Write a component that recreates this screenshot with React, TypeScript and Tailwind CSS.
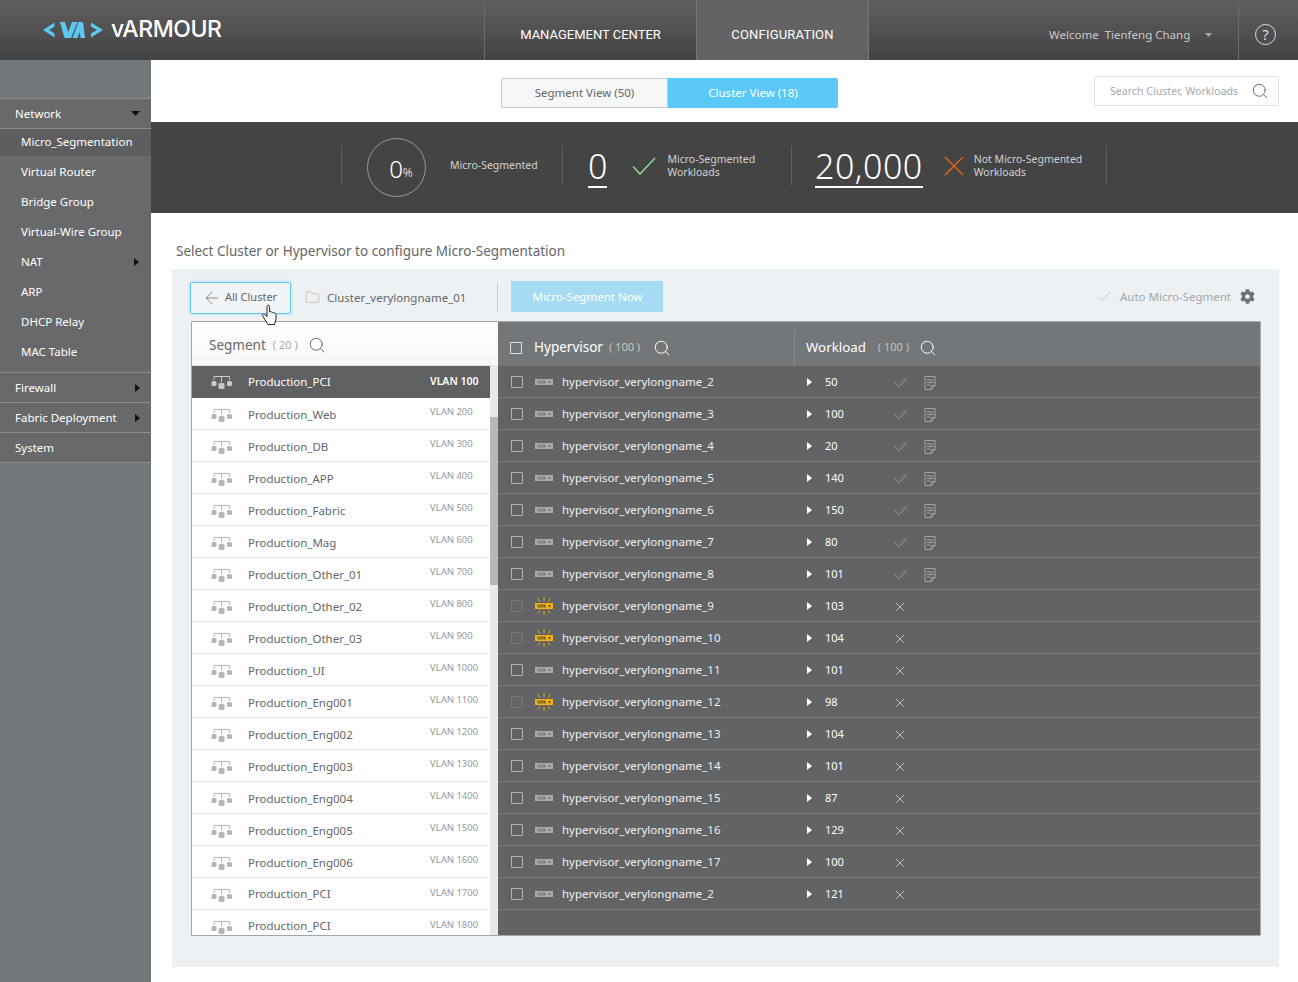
import { ArrowLeft, Folder, Search } from "lucide-react";
import { FaCog } from "react-icons/fa";

const font = "font-['Noto_Sans',sans-serif]";

const subItems = [
  { label: "Micro_Segmentation", active: true },
  { label: "Virtual Router" },
  { label: "Bridge Group" },
  { label: "Virtual-Wire Group" },
  { label: "NAT", arrow: true },
  { label: "ARP" },
  { label: "DHCP Relay" },
  { label: "MAC Table" },
];

const segments = [
  ["Production_PCI", "VLAN 100"],
  ["Production_Web", "VLAN 200"],
  ["Production_DB", "VLAN 300"],
  ["Production_APP", "VLAN 400"],
  ["Production_Fabric", "VLAN 500"],
  ["Production_Mag", "VLAN 600"],
  ["Production_Other_01", "VLAN 700"],
  ["Production_Other_02", "VLAN 800"],
  ["Production_Other_03", "VLAN 900"],
  ["Production_UI", "VLAN 1000"],
  ["Production_Eng001", "VLAN 1100"],
  ["Production_Eng002", "VLAN 1200"],
  ["Production_Eng003", "VLAN 1300"],
  ["Production_Eng004", "VLAN 1400"],
  ["Production_Eng005", "VLAN 1500"],
  ["Production_Eng006", "VLAN 1600"],
  ["Production_PCI", "VLAN 1700"],
  ["Production_PCI", "VLAN 1800"],
];

const hypervisors = [
  { name: "hypervisor_verylongname_2", count: 50, done: true },
  { name: "hypervisor_verylongname_3", count: 100, done: true },
  { name: "hypervisor_verylongname_4", count: 20, done: true },
  { name: "hypervisor_verylongname_5", count: 140, done: true },
  { name: "hypervisor_verylongname_6", count: 150, done: true },
  { name: "hypervisor_verylongname_7", count: 80, done: true },
  { name: "hypervisor_verylongname_8", count: 101, done: true },
  { name: "hypervisor_verylongname_9", count: 103, warn: true },
  { name: "hypervisor_verylongname_10", count: 104, warn: true },
  { name: "hypervisor_verylongname_11", count: 101 },
  { name: "hypervisor_verylongname_12", count: 98, warn: true },
  { name: "hypervisor_verylongname_13", count: 104 },
  { name: "hypervisor_verylongname_14", count: 101 },
  { name: "hypervisor_verylongname_15", count: 87 },
  { name: "hypervisor_verylongname_16", count: 129 },
  { name: "hypervisor_verylongname_17", count: 100 },
  { name: "hypervisor_verylongname_2", count: 121 },
];

function Logo() {
  return (
    <svg width="61" height="18" viewBox="0 0 61 18" className="block shrink-0">
      <g fill="#5cc8f2">
        <path d="M11.500 1.500 0 9l11.500 7.500v-4.200L6 9l5.500-3.300z" />
        <path d="M17 1h5l4.500 14L24 17h-2.500z" />
        <path d="M29 1h5.500L28 17h-5z" />
        <path d="M35.500 1H40l2 16h-4.500l-.6-6-2.400 6H29.500z" />
        <path d="M48 1.500 60 9l-12 7.500v-4.200L54 9l-6-3.300z" />
      </g>
    </svg>
  );
}

function SegmentIcon({ color }: { color: string }) {
  return (
    <svg width="21" height="13" viewBox="0 0 21 13" className="block shrink-0">
      <path d="M3 4V.5h15.500V4M10.500 .5V6" fill="none" stroke={color} strokeWidth="1" />
      <rect x="0.500" y="5" width="5" height="5" rx="1.500" fill={color} />
      <rect x="7.500" y="7" width="6" height="6" rx="1.500" fill={color} />
      <rect x="16" y="5" width="5" height="5" rx="1.500" fill={color} />
    </svg>
  );
}

function ServerIcon({ warn }: { warn?: boolean }) {
  const c = warn ? "#f5b014" : "#a9abad";
  return (
    <svg width="20" height="20" viewBox="0 0 20 20" className="block shrink-0">
      {warn && (
        <path
          d="M10 1v4M10 15v4M4 2.500l2 3M16 2.500l-2 3M4 17.500l2-3M16 17.500l-2-3"
          stroke={c}
          strokeWidth="1"
          fill="none"
        />
      )}
      <rect x="1" y="7" width="18" height="6" fill={c} />
      <path d="M3.500 8.500h8v3h-8zM14.500 9h2v2h-2z" fill={warn ? "#6b5a2a" : "#77797b"} />
      <path d="M5 8.500v3M7 8.500v3M9 8.500v3" stroke={c} strokeWidth="0.700" />
    </svg>
  );
}

function ThinCheck({ size = 14, color = "#a4a6a8" }: { size?: number; color?: string }) {
  return (
    <svg width={size} height={size * 0.75} viewBox="0 0 16 12" className="block">
      <path d="M1 6.500 5.500 11 15 1" fill="none" stroke={color} strokeWidth="1" />
    </svg>
  );
}

function NoteIcon() {
  return (
    <svg width="12" height="14" viewBox="0 0 12 14" className="block">
      <path d="M1 .5h10v9l-3.500 4H1z" fill="none" stroke="#a4a6a8" />
      <path d="M3 4h6M3 6.500h6M3 9h3M7.500 13V9.500H11" fill="none" stroke="#a4a6a8" />
    </svg>
  );
}

function Caret({ color = "#fff", dir = "right" }: { color?: string; dir?: "right" | "down" }) {
  return dir === "right" ? (
    <svg width="5" height="8" viewBox="0 0 5 8" className="block">
      <path d="M0 0 5 4 0 8z" fill={color} />
    </svg>
  ) : (
    <svg width="9" height="5" viewBox="0 0 9 5" className="block">
      <path d="M0 0h9L4.500 5z" fill={color} />
    </svg>
  );
}

function Header() {
  return (
    <div className="flex h-[60px] bg-gradient-to-b from-[#605e5e] to-[#444343] text-white">
      <div className="flex w-[484px] items-center pl-[43px] pb-[1px]">
        <Logo />
        <span className="ml-[7px] -mt-[1px] font-['Inter',sans-serif] text-[23px] font-medium leading-none tracking-[-0.4px]">
          vARMOUR
        </span>
      </div>
      <div className="flex h-[60px] w-[212px] items-center justify-center border-l border-[#6d6b6b] pt-[10px] font-['Roboto',sans-serif] text-[13px]">
        MANAGEMENT CENTER
      </div>
      <div className="flex h-[60px] w-[173px] items-center justify-center border-x border-[#777] bg-[#636363] pt-[10px] font-['Roboto',sans-serif] text-[13px] tracking-[0.2px]">
        CONFIGURATION
      </div>
      <div className="flex flex-1 items-center pl-[180px] pt-[9px] text-[11.500px] text-[#c9c9c9]">
        <span>Welcome</span>
        <span className="ml-[6px]">Tienfeng Chang</span>
        <span className="ml-[15px]">
          <svg width="7" height="4" viewBox="0 0 7 4" className="block">
            <path d="M0 0h7L3.500 4z" fill="#aaa" />
          </svg>
        </span>
      </div>
      <div className="flex w-[60px] items-center justify-center border-l border-[#6d6b6b] pr-[6px] pt-[9px]">
        <div className="flex h-[21px] w-[21px] items-center justify-center rounded-full border border-[#ddd] text-[15px] leading-none text-[#ddd]">
          ?
        </div>
      </div>
    </div>
  );
}

function SideRow({ label, arrow, down }: { label: string; arrow?: boolean; down?: boolean }) {
  return (
    <div className="flex h-[30px] items-center justify-between border-b border-[#898b8d] pl-[15px] pr-[11px] text-[11.500px] text-white">
      <span>{label}</span>
      {down && <Caret color="#111" dir="down" />}
      {arrow && <Caret color="#111" />}
    </div>
  );
}

function Sidebar() {
  return (
    <div className="flex w-[151px] shrink-0 flex-col bg-[#73777a]">
      <div className="h-[39px] border-b border-[#898b8d]" />
      <div className="bg-[#68696b]">
        <SideRow label="Network" down />
      </div>
      <div className="bg-[#68696b] pb-[6px]">
        {subItems.map((item) => (
          <div
            key={item.label}
            className={`flex items-center justify-between pl-[21px] pr-[12px] text-[11.500px] text-white ${
              item.active ? "h-[27px] bg-[#5d5e60] pb-[1px]" : "h-[30px] pt-[1px]"
            }`}
          >
            <span>{item.label}</span>
            {item.arrow && <Caret color="#111" />}
          </div>
        ))}
      </div>
      <div className="border-t border-[#898b8d] bg-[#68696b]">
        <SideRow label="Firewall" arrow />
        <SideRow label="Fabric Deployment" arrow />
        <SideRow label="System" />
      </div>
    </div>
  );
}

function Stats() {
  return (
    <div className="flex h-[91px] items-center bg-[#444444] pl-[190px] pb-[4px] text-[#d2d2d2]">
      <div className="flex h-[39px] w-[221px] items-center border-l border-[#5f5f5f] pl-[25px]">
        <div className="mt-[4px] flex h-[59px] w-[59px] shrink-0 items-center justify-center rounded-full border border-[#9a9a9a] pl-[9px] pt-[2px]">
          <span className="text-[24px] font-light leading-none text-white">0</span>
          <span className="mt-[8px] text-[12px] leading-none">%</span>
        </div>
        <span className="ml-[24px] text-[10.500px]">Micro-Segmented</span>
      </div>
      <div className="flex h-[39px] w-[229px] items-center border-l border-[#5f5f5f] pl-[25px]">
        <span className="mt-[2px] border-b-2 border-white text-[34px] font-light leading-[40px] text-white">0</span>
        <svg width="24" height="18" viewBox="0 0 24 18" className="ml-[25px] shrink-0">
          <path d="M1 9.500 8 17 23 1" fill="none" stroke="#8ee08f" strokeWidth="1.500" />
        </svg>
        <span className="ml-[11px] text-[10.500px] leading-[13px]">
          Micro-Segmented
          <br />
          Workloads
        </span>
      </div>
      <div className="flex h-[39px] w-[316px] items-center border-x border-[#5f5f5f] pl-[23px]">
        <span className="mt-[2px] border-b-2 border-white text-[34px] font-light leading-[40px] tracking-[0.5px] text-white">
          20,000
        </span>
        <svg width="20" height="20" viewBox="0 0 20 20" className="ml-[21px] shrink-0">
          <path d="M1 1l18 18M19 1 1 19" fill="none" stroke="#e0661a" strokeWidth="1.500" />
        </svg>
        <span className="ml-[10px] text-[10.500px] leading-[13px]">
          Not Micro-Segmented
          <br />
          Workloads
        </span>
      </div>
    </div>
  );
}

function SegmentList() {
  return (
    <div className="flex w-[306px] shrink-0 flex-col overflow-hidden bg-white">
      <div className="flex h-[44px] shrink-0 items-center border-b border-[#e2e4e6] bg-gradient-to-b from-white to-[#f6f7f8] pl-[17px] pt-[3px]">
        <span className="text-[13.500px] text-[#666]">Segment</span>
        <span className="ml-[7px] text-[11px] text-[#aaa]">( 20 )</span>
        <Search size={18} strokeWidth={1.3} className="ml-[10px] text-[#666]" />
      </div>
      <div className="flex min-h-0 flex-1">
        <div className="w-[298px] shrink-0">
          {segments.map(([name, vlan], i) => (
            <div
              key={vlan}
              className={`flex h-[32px] items-center border-b pl-[19px] ${
                i === 0 ? "border-[#5f6062] bg-[#5f6062] text-white" : "border-[#e6e8ea] text-[#666]"
              }`}
            >
              <span className={i === 0 ? "mt-[2px]" : "mt-[4px]"}>
                <SegmentIcon color={i === 0 ? "#c9cacb" : "#b4b6b8"} />
              </span>
              <span className={`ml-[16px] w-[182px] text-[11.500px] ${i === 0 || i > 15 ? "" : "mt-[2px]"}`}>
                {name}
              </span>
              {i === 0 ? (
                <span className="text-[10.500px] font-semibold">{vlan}</span>
              ) : (
                <span className={`text-[9.500px] text-[#999] ${i > 15 ? "" : "mb-[2px]"}`}>{vlan}</span>
              )}
            </div>
          ))}
        </div>
        <div className="w-[8px] shrink-0 bg-[#e6e8ea] pt-[51px]">
          <div className="h-[168px] bg-[#b5b8ba]" />
        </div>
      </div>
    </div>
  );
}

function Box({ dim }: { dim?: boolean }) {
  return (
    <span
      className={`block h-[12px] w-[12px] shrink-0 rounded-[1px] border ${dim ? "border-[#77787a]" : "border-[#b4b6b8]"}`}
    />
  );
}

function HypervisorTable() {
  return (
    <div className="flex flex-1 flex-col bg-[#626365]">
      <div className="flex h-[44px] shrink-0 bg-[#73777a] text-white">
        <div className="flex w-[296px] items-center pl-[12px] pt-[7px]">
          <span className="block h-[12px] w-[12px] border border-[#e2e3e4]" />
          <span className="ml-[12px] text-[13.500px]">Hypervisor</span>
          <span className="ml-[6px] text-[11px] text-[#c4c6c8]">( 100 )</span>
          <Search size={18} strokeWidth={1.3} className="ml-[13px]" />
        </div>
        <div className="mt-[7px] flex flex-1 items-center border-l border-[#888b8d] pl-[11px]">
          <span className="text-[13.300px]">Workload</span>
          <span className="ml-[12px] text-[11px] text-[#c4c6c8]">( 100 )</span>
          <Search size={18} strokeWidth={1.3} className="ml-[10px]" />
        </div>
      </div>
      {hypervisors.map((h, i) => (
        <div key={i} className="flex h-[32px] items-center border-b border-[#7a7b7d] pl-[13px] text-white">
          <Box dim={h.warn} />
          <span className="ml-[11px]">
            <ServerIcon warn={h.warn} />
          </span>
          <span className="ml-[8px] w-[245px] text-[11.500px] text-[#f0f0f0]">{h.name}</span>
          <Caret />
          <span className="ml-[13px] mt-[2px] w-[69px] text-[11px]">{h.count}</span>
          {h.done ? (
            <div className="mt-[2px] flex items-center">
              <ThinCheck />
              <span className="ml-[16px]">
                <NoteIcon />
              </span>
            </div>
          ) : (
            <svg width="10" height="10" viewBox="0 0 10 10" className="ml-[1px] mt-[3px]">
              <path d="M1 1l8 8M9 1 1 9" fill="none" stroke="#b8babc" />
            </svg>
          )}
        </div>
      ))}
    </div>
  );
}

function Panel() {
  return (
    <div className="mx-[19px] ml-[21px] mt-[8px] flex h-[698px] flex-col bg-[#edf1f4] pl-[19px] pr-[18px] pb-[31px]">
      <div className="relative flex h-[52px] shrink-0 items-center">
        <div className="-ml-[1px] mt-[5px] flex h-[32px] w-[101px] items-center rounded-[2px] border border-[#5ac8f5] bg-[#f2f5f7] pl-[11px] shadow-[0_0_3px_#9fdcf5]">
          <ArrowLeft size={20} strokeWidth={1} className="text-[#777]" />
          <span className="ml-[3px] text-[11px] text-[#666]">All Cluster</span>
        </div>
        <Folder size={15} strokeWidth={1} className="ml-[14px] mt-[4px] text-[#aaa]" />
        <span className="ml-[7px] mt-[5px] text-[11.500px] text-[#666]">Cluster_verylongname_01</span>
        <div className="ml-[31px] mt-[5px] h-[31px] w-px bg-[#c9cdd0]" />
        <div className="ml-[13px] mt-[3px] flex h-[31px] w-[152px] items-center justify-center bg-[#a6dcf3] text-[11.500px] text-white">
          Micro-Segment Now
        </div>
        <div className="ml-auto mt-[3px] flex items-center pr-[6px]">
          <ThinCheck color="#c2c6c9" />
          <span className="ml-[9px] text-[11.500px] text-[#a3a7aa]">Auto Micro-Segment</span>
          <FaCog size={15} className="ml-[9px] text-[#6d7072]" />
        </div>
        <svg width="18" height="22" viewBox="0 0 18 22" className="absolute left-[70px] top-[35px] z-10">
          <path
            d="M6 9V2.500a1.300 1.300 0 0 1 2.600 0V8l1-.3c1-.2 1.400.3 1.500.8 1-.4 1.800 0 1.900.7 1-.3 2 .2 2 1.200V15l-1.500 5.500H7L3 14l-1.500-2.500c-.5-1 .8-2 1.800-1.200L6 12.500z"
            fill="#fff"
            stroke="#222"
            strokeWidth="1"
          />
        </svg>
      </div>
      <div className="flex min-h-0 flex-1 overflow-hidden rounded-[1px] border border-[#a3a7aa]">
        <SegmentList />
        <HypervisorTable />
      </div>
    </div>
  );
}

export default function App() {
  return (
    <div className={`flex h-[982px] w-[1298px] flex-col overflow-hidden bg-white ${font}`}>
      <Header />
      <div className="flex min-h-0 flex-1">
        <Sidebar />
        <div className="min-w-0 flex-1">
          <div className="flex h-[62px] items-center justify-between pl-[350px] pr-[19px]">
            <div className="mt-[3px] flex h-[30px] text-[11.500px]">
              <div className="flex w-[167px] items-center justify-center rounded-l-[2px] border border-[#c9cbce] bg-[#f6f7f9] text-[#666]">
                Segment View (50)
              </div>
              <div className="flex w-[170px] items-center justify-center rounded-r-[2px] bg-[#5ac9f7] text-white">
                Cluster View (18)
              </div>
            </div>
            <div className="flex h-[30px] w-[185px] items-center justify-between rounded-[2px] border border-[#e2e4e6] pl-[15px] pr-[9px] text-[10.600px] text-[#a5a7a9]">
              <span className="pt-[1px]">Search Cluster, Workloads</span>
              <Search size={18} strokeWidth={1.25} className="text-[#666]" />
            </div>
          </div>
          <Stats />
          <div className="pl-[25px] pt-[28px] text-[13.500px] leading-[20px] text-[#666]">
            Select Cluster or Hypervisor to configure Micro-Segmentation
          </div>
          <Panel />
        </div>
      </div>
    </div>
  );
}
